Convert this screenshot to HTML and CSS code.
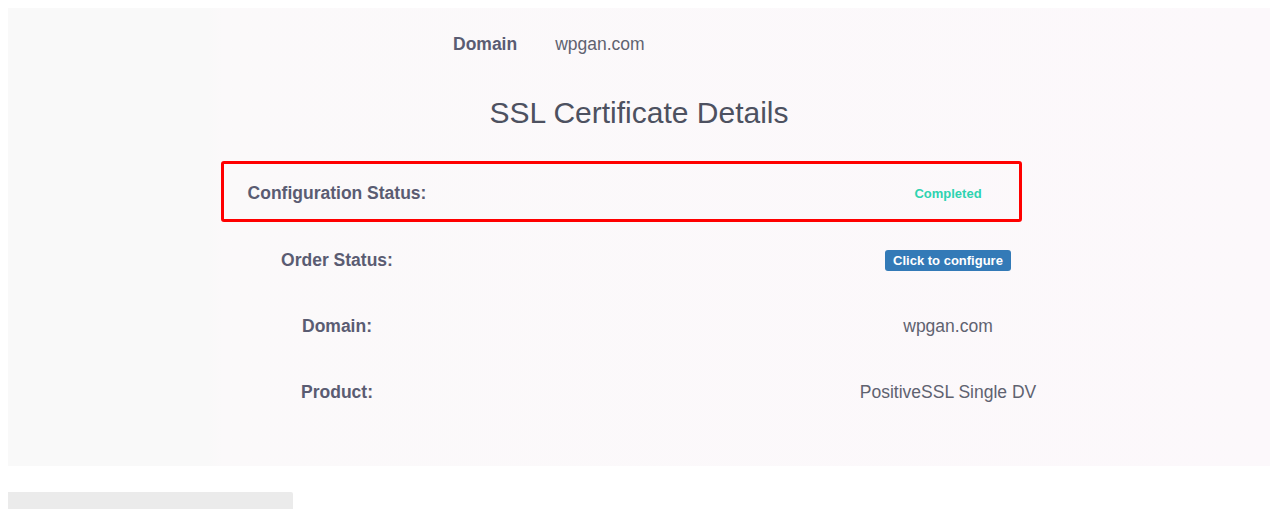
FILE: index.html
```html
<!DOCTYPE html>
<html>
<head>
<meta charset="utf-8">
<link rel="stylesheet" href="styles.css">
</head>
<body>
<div class="panel">
  <div class="top-domain">
    <span class="top-label">Domain</span>
    <span class="top-value">wpgan.com</span>
  </div>
  <h1 class="title">SSL Certificate Details</h1>
  <div class="details">
    <div class="row row-highlight">
      <div class="label">Configuration Status:</div>
      <div class="spacer"></div>
      <div class="value"><span class="completed">Completed</span></div>
    </div>
    <div class="row row-first">
      <div class="label">Order Status:</div>
      <div class="spacer"></div>
      <div class="value"><span class="btn">Click to configure</span></div>
    </div>
    <div class="row">
      <div class="label">Domain:</div>
      <div class="spacer"></div>
      <div class="value">wpgan.com</div>
    </div>
    <div class="row">
      <div class="label">Product:</div>
      <div class="spacer"></div>
      <div class="value">PositiveSSL Single DV</div>
    </div>
  </div>
</div>
<div class="bottom-bar"></div>
</body>
</html>
```
FILE: styles.css
```css
html, body {
  background: #ffffff;
}
body {
  margin: 8px 0 0 8px;
  font-family: "Liberation Sans", Arial, sans-serif;
  overflow: hidden;
}
.panel {
  height: 458px;
  box-sizing: border-box;
  padding-top: 24px;
  background: linear-gradient(to right, #f9f9f9 0, #f9f9f9 200px, #fbf9fa 215px, #fcf8fb 100%);
}
.top-domain {
  display: flex;
  align-items: center;
  height: 24px;
  margin-left: 445px;
  font-size: 17.5px;
  gap: 38px;
}
.top-label {
  font-weight: bold;
  color: #5a5c72;
}
.top-value {
  color: #5f6270;
}
.title {
  margin: 39px 0 0 0;
  text-align: center;
  font-weight: normal;
  font-size: 30px;
  line-height: 36px;
  color: #4d5160;
}
.details {
  margin: 30px 0 0 213px;
  width: 801px;
}
.row {
  display: grid;
  grid-template-columns: 226px 1fr 142px;
  align-items: center;
  height: 66px;
  border: 3px solid transparent;
  box-sizing: border-box;
  text-align: center;
}
.row-highlight {
  height: 61px;
  padding-top: 3px;
  border-color: #ff0000;
  border-radius: 3px;
}
.row-first {
  margin-top: 5px;
}
.label {
  font-weight: bold;
  font-size: 17.5px;
  color: #5a5c72;
  white-space: nowrap;
}
.value {
  font-size: 17.5px;
  color: #5f6270;
  white-space: nowrap;
  display: flex;
  justify-content: center;
}
.completed {
  color: #2ed3b0;
  font-weight: bold;
  font-size: 13px;
}
.btn {
  display: inline-block;
  background: #337ab7;
  color: #ffffff;
  font-weight: bold;
  font-size: 13px;
  line-height: 17px;
  padding: 2px 8px;
  border-radius: 3px;
}
.bottom-bar {
  margin: 26px 0 0 -2px;
  width: 287px;
  height: 20px;
  background: #ebebeb;
  border-radius: 2px;
}
```
